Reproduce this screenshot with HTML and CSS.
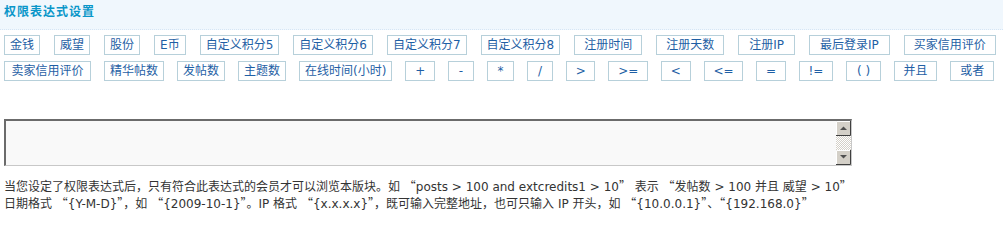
FILE: index.html
```html
<!DOCTYPE html>
<html lang="zh-CN">
<head>
<meta charset="utf-8">
<title>权限表达式设置</title>
<link rel="stylesheet" href="styles.css">
</head>
<body>
<div class="hd"><h3>权限表达式设置</h3></div>
<div class="units">
  <div class="row r1">
    <a class="u">金钱</a>
    <a class="u">威望</a>
    <a class="u">股份</a>
    <a class="u">E币</a>
    <a class="u">自定义积分5</a>
    <a class="u">自定义积分6</a>
    <a class="u">自定义积分7</a>
    <a class="u">自定义积分8</a>
    <a class="u w">注册时间</a>
    <a class="u w">注册天数</a>
    <a class="u wx">注册IP</a>
    <a class="u wx">最后登录IP</a>
    <a class="u w">买家信用评价</a>
  </div>
  <div class="row r2">
    <a class="u m">卖家信用评价</a>
    <a class="u">精华帖数</a>
    <a class="u">发帖数</a>
    <a class="u">主题数</a>
    <a class="u">在线时间(小时)</a>
    <a class="u w">+</a>
    <a class="u wx">-</a>
    <a class="u wx">*</a>
    <a class="u wx">/</a>
    <a class="u w">&gt;</a>
    <a class="u w">&gt;=</a>
    <a class="u w">&lt;</a>
    <a class="u w">&lt;=</a>
    <a class="u w">=</a>
    <a class="u w">!=</a>
    <a class="u wx">( )</a>
    <a class="u w">并且</a>
    <a class="u w">或者</a>
  </div>
</div>
<div class="editor">
  <textarea class="area"></textarea>
  <div class="sb">
    <svg width="15" height="44" viewBox="0 0 15 44">
      <defs>
        <pattern id="chk" width="2" height="2" patternUnits="userSpaceOnUse">
          <rect width="2" height="2" fill="#ffffff"/>
          <rect width="1" height="1" fill="#d4d0c8"/>
          <rect x="1" y="1" width="1" height="1" fill="#d4d0c8"/>
        </pattern>
      </defs>
      <rect x="0" y="0" width="15" height="44" fill="url(#chk)"/>
      <rect x="0" y="0" width="15" height="15" fill="#d4d0c8"/>
      <path d="M0 14.5 H14.5 V0" fill="none" stroke="#404040"/>
      <path d="M0.5 14 V0.5 H14" fill="none" stroke="#ffffff"/>
      <path d="M4 9 L7.5 5.5 L11 9 Z" fill="#505050"/>
      <rect x="0" y="29" width="15" height="15" fill="#d4d0c8"/>
      <path d="M0 43.5 H14.5 V29" fill="none" stroke="#404040"/>
      <path d="M0.5 43 V29.5 H14" fill="none" stroke="#ffffff"/>
      <path d="M4 34 L11 34 L7.5 37.5 Z" fill="#505050"/>
    </svg>
  </div>
</div>
<p class="tips">当您设定了权限表达式后，只有符合此表达式的会员才可以浏览本版块。如 <span class="q">“</span>posts &gt; 100 and extcredits1 &gt; 10<span class="q">”</span> 表示 <span class="q">“</span>发帖数 &gt; 100 并且 威望 &gt; 10<span class="q">”</span><br>日期格式 <span class="q">“</span>{Y-M-D}<span class="q">”</span>，如 <span class="q">“</span>{2009-10-1}<span class="q">”</span>。IP 格式 <span class="q">“</span>{x.x.x.x}<span class="q">”</span>，既可输入完整地址，也可只输入 IP 开头，如 <span class="q">“</span>{10.0.0.1}<span class="q">”</span>、<span class="q">“</span>{192.168.0}<span class="q">”</span></p>
</body>
</html>
```

FILE: styles.css
```css
html, body {
  margin: 0;
  padding: 0;
  background: #ffffff;
}
body {
  font-family: "DejaVu Sans", "Noto Sans CJK SC", sans-serif;
  font-size: 12px;
  color: #333333;
}
.hd {
  height: 29px;
  background: #f0f7fd;
  border-bottom: 1px dotted #d5e5f5;
  padding-left: 4px;
}
.hd h3 {
  margin: 0;
  font-size: 12px;
  line-height: 24px;
  font-weight: bold;
  letter-spacing: 1px;
  color: #0a96c9;
}
.units {
  padding: 5px 0 0 4px;
}
.row {
  display: flex;
  align-items: flex-start;
  height: 26px;
}
.r1 {
  gap: 14px;
}
.r2 {
  gap: 13px;
}
.u {
  display: block;
  height: 18px;
  line-height: 18px;
  padding: 0 5px;
  border: 1px solid #b7d0da;
  color: #1f5fa5;
  white-space: nowrap;
  text-decoration: none;
}
.u.m {
  padding: 0 6.5px;
}
.u.w {
  padding: 0 9px;
}
.u.wx {
  padding: 0 10px;
}
.r2 .u.w {
  padding: 0 8.75px;
}
.r2 .u.wx {
  padding: 0 9.75px;
}
.editor {
  position: relative;
  width: 848px;
  height: 47px;
  margin: 32px 0 0 4px;
}
.area {
  display: block;
  box-sizing: border-box;
  width: 848px;
  height: 47px;
  margin: 0;
  padding: 2px;
  resize: none;
  overflow: hidden;
  background: #f9f9f9;
  border-style: solid;
  border-width: 2px 1px 1px 2px;
  border-color: #6b6b6b #c8c8c8 #c8c8c8 #6b6b6b;
  outline: none;
}
.sb {
  position: absolute;
  right: 1px;
  top: 2px;
  width: 15px;
  height: 44px;
  line-height: 0;
}
.tips {
  margin: 12px 0 0 4px;
  line-height: 15px;
  color: #333333;
}
.q {
  font-family: "Noto Sans CJK SC", sans-serif;
}
```
